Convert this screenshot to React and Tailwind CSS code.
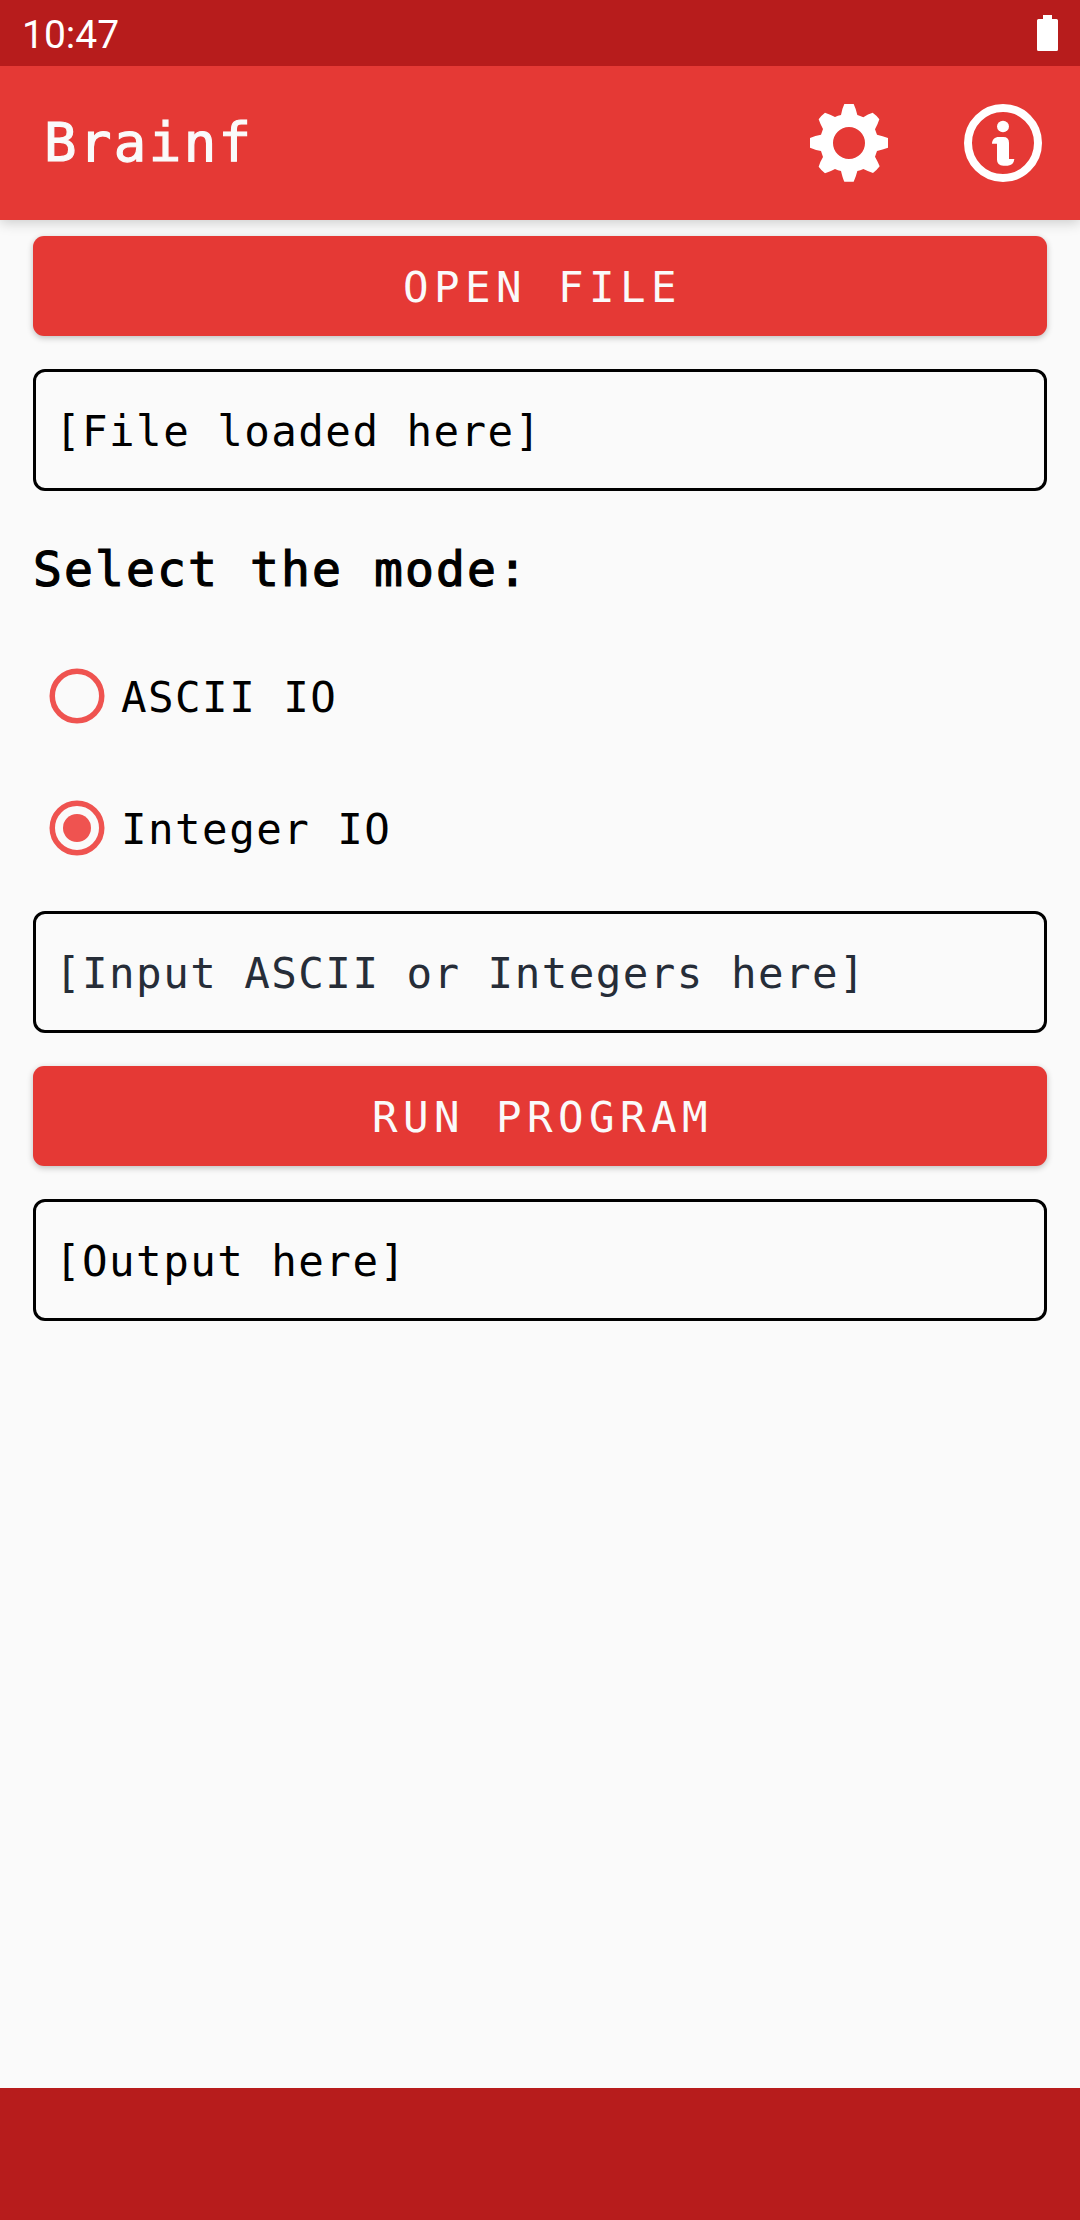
import React, { useState } from "react";

function BatteryIcon() {
  return (
    <svg className="h-9 w-[21px]" viewBox="0 0 21 36" fill="#fff">
      <path d="M6 0h9v4h4.500q1.500 0 1.500 1.500v29q0 1.500-1.500 1.500h-18Q0 36 0 34.500v-29Q0 4 1.500 4H6Z" />
    </svg>
  );
}

function GearIcon() {
  return (
    <svg className="size-[78px]" viewBox="90 312 234 234" fill="#fff">
      <path
        fillRule="evenodd"
        d="M193 312H221Q227 324 232 345Q240 347 250 352Q264 342 278 338Q290 346 298 358Q293 374 285 388L291 404Q308 408 324 414V443Q308 449 291 453L285 470Q293 484 299 499Q290 511 279 519Q264 514 250 507Q241 511 232 513Q228 530 221 545H193Q188 535 183 513Q174 511 165 507Q151 515 135 520Q124 511 116 500Q121 484 129 471L123 453Q106 450 90 443V414Q106 407 123 404L129 387Q121 373 116 358Q124 346 135 338Q151 343 165 351Q174 347 183 345Q187 324 193 312ZM255 429A48 48 0 1 0 159 429A48 48 0 1 0 255 429Z"
      />
    </svg>
  );
}

function InfoIcon() {
  return (
    <svg className="size-[78px]" viewBox="552 312 234 234" fill="#fff">
      <circle cx="669" cy="429" r="105" fill="none" stroke="#fff" strokeWidth="24" />
      <ellipse cx="669" cy="379.500" rx="18" ry="17" />
      <path d="M636 431C636 419 645 411 656 411H670Q687 411 687 428V477H703Q701 496 683 497H670Q651 496 651 479V431Z" />
    </svg>
  );
}

function Radio({ label, checked, onSelect }) {
  return (
    <div
      role="radio"
      aria-checked={checked}
      onClick={onSelect}
      className="flex h-[132px] items-center pl-4"
    >
      <svg className="size-14" viewBox="0 0 56 56">
        <circle cx="28" cy="28" r="24.750" fill="none" stroke="#ef5350" strokeWidth="5.500" />
        {checked && <circle cx="28" cy="28" r="14" fill="#ef5350" />}
      </svg>
      <span className="pt-[3px] pl-4 text-black">{label}</span>
    </div>
  );
}

function Field({ children, className = "text-black" }) {
  return (
    <div className="flex h-[122px] items-center rounded-[12px] border-[3px] border-black pt-[3px] pl-[19px]">
      <span className={className}>{children}</span>
    </div>
  );
}

function Button({ children }) {
  return (
    <button className="flex h-[100px] w-full items-center justify-center rounded-[11px] bg-[#e53935] pt-[3px] pl-[5px] tracking-[5.400px] text-[#fafafa] shadow-[0_2px_6px_rgba(0,0,0,0.24)]">
      {children}
    </button>
  );
}

export default function App() {
  const [mode, setMode] = useState("integer");
  return (
    <div className="flex h-[2220px] w-[1080px] flex-col bg-[#fafafa] font-['DejaVu_Sans_Mono',monospace] text-[42.500px] leading-[50px] tracking-[1.450px] whitespace-pre">
      <div className="z-10 flex h-[66px] items-center justify-between bg-[#b71c1c] pr-[22px] pl-[22px]">
        <span className="pt-[4px] font-['Roboto',sans-serif] text-[39px] leading-[44px] tracking-normal text-white">
          10:47
        </span>
        <BatteryIcon />
      </div>
      <header className="flex h-[154px] items-center bg-[#e53935] pr-[38px] pl-[44px] shadow-[0_3px_12px_rgba(0,0,0,0.18)]">
        <h1 className="flex-1 text-[54px] leading-[64px] tracking-[2.400px] text-[#fafafa] [-webkit-text-stroke:1.200px_#fafafa]">
          Brainf
        </h1>
        <div className="flex gap-[76px]">
          <GearIcon />
          <InfoIcon />
        </div>
      </header>
      <main className="flex flex-1 flex-col px-[33px] pt-4">
        <Button>OPEN FILE</Button>
        <div className="h-[33px]" />
        <Field>[File loaded here]</Field>
        <h2 className="flex h-[139px] items-center pt-[17px] text-[48px] tracking-[2.100px] text-black [-webkit-text-stroke:1.200px_#000]">
          Select the mode:
        </h2>
        <div role="radiogroup" className="mb-[17px]">
          <Radio label="ASCII IO" checked={mode === "ascii"} onSelect={() => setMode("ascii")} />
          <Radio label="Integer IO" checked={mode === "integer"} onSelect={() => setMode("integer")} />
        </div>
        <Field className="text-[#262d38]">[Input ASCII or Integers here]</Field>
        <div className="h-[33px]" />
        <Button>RUN PROGRAM</Button>
        <div className="h-[33px]" />
        <Field>[Output here]</Field>
      </main>
      <div className="h-[132px] bg-[#b71c1c]" />
    </div>
  );
}
